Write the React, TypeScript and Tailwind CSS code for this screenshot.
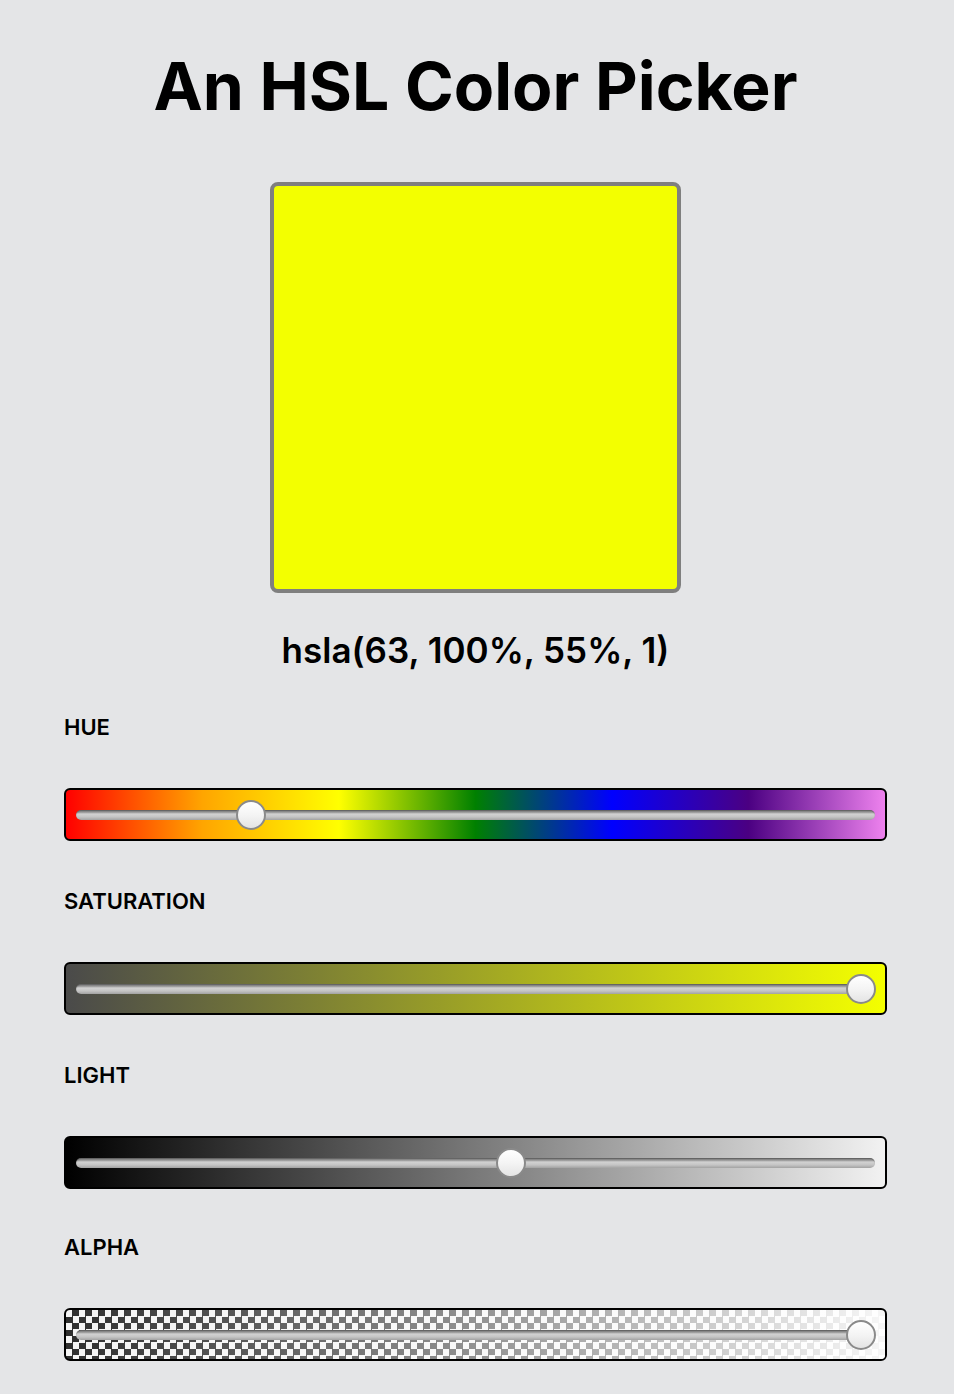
import React from "react";

type Slider = {
  label: string;
  // where the thumb sits, 0..1 along the track
  fraction: number;
  trackBg: string;
  overlay?: string;
  rowClass?: string;
};

const sliders: Slider[] = [
  {
    label: "Hue",
    fraction: 0.208,
    trackBg: "bg-[linear-gradient(to_right,red,orange,yellow,green,blue,indigo,violet)]",
  },
  {
    label: "Saturation",
    fraction: 1,
    trackBg: "bg-[linear-gradient(to_right,#4a4a4a,#f4ff00)]",
  },
  {
    label: "Light",
    fraction: 0.545,
    trackBg: "bg-[linear-gradient(to_right,#000,#f2f2f2)]",
  },
  {
    label: "Alpha",
    fraction: 1,
    trackBg:
      "bg-[conic-gradient(#2e2e2e_25%,#f4f4f4_0_50%,#2e2e2e_0_75%,#f4f4f4_0)] bg-[length:13px_13px]",
    overlay: "bg-[linear-gradient(to_right,rgba(255,255,255,0),rgba(255,255,255,0.96))]",
    rowClass: "-mt-[2px]",
  },
];

const RangeRow = ({ slider }: { slider: Slider }) => (
  <div className={`flex flex-col ${slider.rowClass ?? ""}`}>
    <span className="text-[22px] leading-[24px] font-semibold uppercase text-black">
      {slider.label}
    </span>
    <div
      className={`mt-[49px] h-[53px] rounded-[6px] border-2 border-black overflow-hidden ${slider.trackBg}`}
    >
      <div className={`flex h-full w-full items-center px-[10px] ${slider.overlay ?? ""}`}>
        <div className="relative h-[10px] w-full rounded-full bg-[linear-gradient(#7e7e7e,#8f8f8f_20%,#d2d2d2_40%,#c4c4c4_70%,#a2a2a2)] shadow-[inset_0_1px_1px_rgba(0,0,0,0.25)]">
          <div
            className="absolute top-1/2 -translate-y-1/2 h-[30px] w-[30px] rounded-full border-2 border-[#8a8a8a] bg-[linear-gradient(#ffffff,#f4f4f4_50%,#e4e4e4)]"
            style={{ left: `calc(${slider.fraction} * (100% - 29px))` }}
          />
        </div>
      </div>
    </div>
  </div>
);

export default function App() {
  return (
    <div className="min-h-[1394px] bg-[#e4e5e7] pl-[64px] pr-[67px] pt-[46px] pb-[33px] font-['Inter','Noto_Sans',sans-serif] text-black">
      <h1 className="text-center text-[66px] leading-[80px] font-bold">An HSL Color Picker</h1>

      <div className="mt-[56px] flex justify-center">
        <div className="h-[411px] w-[411px] rounded-[8px] border-4 border-[#7f7f7f] bg-[#f3ff00]" />
      </div>

      <p className="mt-[35px] text-center text-[35px] leading-[44px] font-semibold">
        hsla(63, 100%, 55%, 1)
      </p>

      <div className="mt-[43px] flex flex-col gap-[48px]">
        {sliders.map((s) => (
          <RangeRow key={s.label} slider={s} />
        ))}
      </div>
    </div>
  );
}
